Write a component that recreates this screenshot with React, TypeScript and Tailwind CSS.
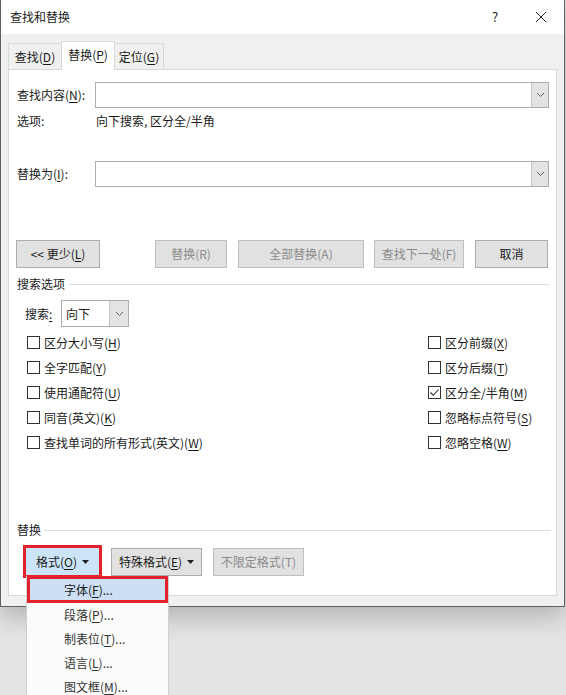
import React from "react";

const U = ({ c }: { c: string }) => <span className="underline underline-offset-[2px]">{c}</span>;

const Chevron = () => (
  <svg width="9" height="6" viewBox="0 0 9 6" fill="none">
    <polyline points="1,1 4.5,4.5 8,1" stroke="#606060" strokeWidth="1" />
  </svg>
);

const Tri = () => (
  <svg width="7" height="4" viewBox="0 0 7 4" className="ml-[5px]">
    <polygon points="0,0 7,0 3.5,4" fill="#222" />
  </svg>
);

function Combo({ h = 26 }: { h?: number }) {
  return (
    <div className="flex-1 h-[26px] border border-[#acacac] bg-white flex justify-end">
      <div className="w-[17px] h-full bg-[#e3e3e3] border-l border-[#c4c4c4] flex items-center justify-center">
        <Chevron />
      </div>
    </div>
  );
}

function Btn({ w, children, disabled }: { w: string; children: React.ReactNode; disabled?: boolean }) {
  return (
    <div
      className={`${w} h-[28px] border border-[#adadad] bg-[#e1e1e1] flex items-center justify-center ${
        disabled ? "text-[#8a8a8a] border-[#bfbfbf]" : "text-[#1a1a1a]"
      }`}
    >
      {children}
    </div>
  );
}

function Check({ checked, children }: { checked?: boolean; children: React.ReactNode }) {
  return (
    <div className="h-[25px] flex items-center">
      <div className="w-[13px] h-[13px] border border-[#333333] bg-white flex items-center justify-center">
        {checked && (
          <svg width="11" height="11" viewBox="0 0 11 11" fill="none">
            <polyline points="1.5,5.5 4.3,8.3 9.5,2.5" stroke="#222" strokeWidth="1.1" />
          </svg>
        )}
      </div>
      <span className="ml-[4px]">{children}</span>
    </div>
  );
}

export default function App() {
  return (
    <div className="relative w-[566px] h-[695px] overflow-hidden bg-[#e4e4e4] font-['Microsoft_YaHei','Noto_Sans_CJK_SC',sans-serif] text-[12px] leading-[16px] text-[#1a1a1a]">
      {/* dialog */}
      <div className="w-[565px] h-[607px] flex flex-col border-l border-r border-b border-[#5f5f5f] shadow-[0_10px_24px_rgba(0,0,0,0.22)]">
        {/* title bar */}
        <div className="h-[34px] bg-white flex items-center pl-[9px] shrink-0">
          <span className="text-[12px]">查找和替换</span>
          <div className="ml-auto flex h-full">
            <div className="w-[46px] h-full flex items-center justify-center text-[13px] text-[#222]">?</div>
            <div className="w-[46px] h-full flex items-center justify-center">
              <svg width="12" height="12" viewBox="0 0 12 12">
                <path d="M1 1 L11 11 M11 1 L1 11" stroke="#222" strokeWidth="1" />
              </svg>
            </div>
          </div>
        </div>

        {/* body */}
        <div className="flex-1 bg-[#f0f0f0] px-[7px] pb-[10px] flex flex-col">
          {/* tabs */}
          <div className="pt-[8px] flex items-end h-[36px] shrink-0 relative z-10 -mb-px">
            <div className="w-[54px] h-[26px] border border-[#d9d9d9] border-b-0 bg-[#f0f0f0] flex items-center justify-center mb-px">
              查找(<U c="D" />)
            </div>
            <div className="w-[54px] h-[29px] border border-[#d9d9d9] border-b-0 bg-white flex items-center justify-center -ml-px pb-[2px]">
              替换(<U c="P" />)
            </div>
            <div className="w-[50px] h-[26px] border border-[#d9d9d9] border-b-0 bg-[#f0f0f0] flex items-center justify-center -ml-px mb-px">
              定位(<U c="G" />)
            </div>
          </div>

          {/* panel */}
          <div className="flex-1 bg-white border border-[#d9d9d9] flex flex-col">
            {/* find */}
            <div className="mt-[12px] flex items-center h-[26px] pl-[8px] pr-[7px]">
              <div className="w-[78px]">
                查找内容(<U c="N" />):
              </div>
              <Combo />
            </div>
            <div className="mt-[5px] flex items-center h-[16px] pl-[8px]">
              <div className="w-[79px]">选项:</div>
              <div>向下搜索, 区分全/半角</div>
            </div>
            {/* replace */}
            <div className="mt-[32px] flex items-center h-[26px] pl-[8px] pr-[7px]">
              <div className="w-[78px]">
                替换为(<U c="I" />):
              </div>
              <Combo />
            </div>

            {/* buttons */}
            <div className="mt-[53px] flex items-center pl-[7px]">
              <Btn w="w-[84px]">
                &lt;&lt; 更少(<U c="L" />)
              </Btn>
              <div className="w-[55px]" />
              <Btn w="w-[72px]" disabled>
                替换(R)
              </Btn>
              <div className="w-[11px]" />
              <Btn w="w-[126px]" disabled>
                全部替换(A)
              </Btn>
              <div className="w-[10px]" />
              <Btn w="w-[90px]" disabled>
                查找下一处(F)
              </Btn>
              <div className="w-[11px]" />
              <Btn w="w-[73px]">取消</Btn>
            </div>

            {/* search options */}
            <div className="mt-[8px] h-[16px] flex items-center pl-[8px] pr-[7px]">
              <span>搜索选项</span>
              <div className="flex-1 h-px bg-[#dcdcdc] ml-[4px]" />
            </div>
            <div className="mt-[8px] flex items-center h-[27px] pl-[16px]">
              <div className="w-[36px]">
                搜索<span className="underline underline-offset-[2px]">:</span>
              </div>
              <div className="w-[68px] h-[27px] border border-[#acacac] bg-white flex">
                <div className="flex-1 flex items-center pl-[4px]">向下</div>
                <div className="w-[19px] h-full bg-[#e3e3e3] border-l border-[#c4c4c4] flex items-center justify-center">
                  <Chevron />
                </div>
              </div>
            </div>

            <div className="mt-[3px] flex pl-[18px]">
              <div className="w-[401px] flex flex-col">
                <Check>
                  区分大小写(<U c="H" />)
                </Check>
                <Check>
                  全字匹配(<U c="Y" />)
                </Check>
                <Check>
                  使用通配符(<U c="U" />)
                </Check>
                <Check>
                  同音(英文)(<U c="K" />)
                </Check>
                <Check>
                  查找单词的所有形式(英文)(<U c="W" />)
                </Check>
              </div>
              <div className="flex flex-col">
                <Check>
                  区分前缀(<U c="X" />)
                </Check>
                <Check>
                  区分后缀(<U c="T" />)
                </Check>
                <Check checked>
                  区分全/半角(<U c="M" />)
                </Check>
                <Check>
                  忽略标点符号(<U c="S" />)
                </Check>
                <Check>
                  忽略空格(<U c="W" />)
                </Check>
              </div>
            </div>

            {/* replace section */}
            <div className="mt-[67px] h-[16px] flex items-center pl-[8px] pr-[5px]">
              <span>替换</span>
              <div className="flex-1 h-px bg-[#dcdcdc] ml-[4px]" />
            </div>
            <div className="mt-[7px] flex items-center pl-[14px]">
              <div className="w-[79px] h-[33px] border-[3px] border-[#e3202b]">
                <div className="w-full h-full bg-[#cce4f7] flex items-center justify-center">
                  格式(<U c="O" />)
                  <Tri />
                </div>
              </div>
              <div className="w-[9px]" />
              <Btn w="w-[91px]">
                特殊格式(<U c="E" />)
                <Tri />
              </Btn>
              <div className="w-[11px]" />
              <Btn w="w-[91px]" disabled>
                不限定格式(T)
              </Btn>
            </div>
          </div>
        </div>
      </div>

      {/* dropdown menu */}
      <div className="absolute left-[26px] top-[576px] w-[143px] bg-[#fbfbfb] border-l border-r border-[#cfcfcf] flex flex-col text-[#333]">
        <div className="h-[27px] border-[3px] border-[#e3202b] bg-[#cddff3] flex items-center pl-[34px] text-[#1a1a1a]">
          字体(<U c="F" />)...
        </div>
        <div className="h-[24px] flex items-center pl-[37px]">
          段落(<U c="P" />)...
        </div>
        <div className="h-[24px] flex items-center pl-[37px]">
          制表位(<U c="T" />)...
        </div>
        <div className="h-[24px] flex items-center pl-[37px]">
          语言(<U c="L" />)...
        </div>
        <div className="h-[24px] flex items-center pl-[37px]">
          图文框(<U c="M" />)...
        </div>
      </div>
    </div>
  );
}
